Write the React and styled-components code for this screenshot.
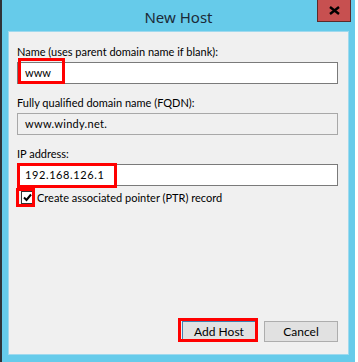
import React from 'react';
import styled, { createGlobalStyle } from 'styled-components';

const GlobalStyle = createGlobalStyle`
  html, body {
    margin: 0;
    padding: 0;
    background: #ffffff;
  }
  body {
    font-family: Lato, "Noto Sans", sans-serif;
    font-size: 11px;
    color: #000;
  }
`;

const Window = styled.div`
  width: 355px;
  height: 362px;
  box-sizing: border-box;
  background: #66cbea;
  border-left: 2px solid #2f3338;
  display: flex;
  flex-direction: column;
`;

const TitleBar = styled.div`
  height: 31px;
  display: grid;
  grid-template-columns: 1fr auto 1fr;
  align-items: start;
`;

const Title = styled.div`
  grid-column: 2;
  font-family: "Noto Sans", sans-serif;
  font-size: 15px;
  line-height: 20px;
  padding-top: 7px;
  color: #1b2a38;
`;

const CloseButton = styled.div`
  grid-column: 3;
  justify-self: end;
  margin-right: 4px;
  width: 34px;
  height: 22px;
  box-sizing: border-box;
  background: #c75050;
  border: 1px solid #5a2b2b;
  border-top: none;
  display: flex;
  align-items: center;
  justify-content: center;
`;

const Panel = styled.div`
  flex: 1;
  margin: 0 6px 7px 6px;
  background: #f0f0f0;
  border: 1px solid #9fd9ee;
  display: flex;
  flex-direction: column;
  padding: 12px 10px 12px 8px;
`;

const Label = styled.div`
  line-height: 15px;
  margin-bottom: 3px;
  color: #000;
`;

const Field = styled.div`
  position: relative;
  margin-bottom: ${p => p.$gap || 11}px;
`;

const TextBox = styled.div`
  height: 22px;
  box-sizing: border-box;
  border: 1px solid ${p => (p.$readOnly ? '#a8a8a8' : '#7a7a7a')};
  background: ${p => (p.$readOnly ? '#f0f0f0' : '#ffffff')};
  padding-left: 7px;
  line-height: 20px;
  letter-spacing: ${p => p.$spacing || 0}px;
  color: #000;
`;

const Highlight = styled.div`
  position: absolute;
  left: ${p => p.$left}px;
  top: ${p => p.$top}px;
  width: ${p => p.$w}px;
  height: ${p => p.$h}px;
  box-sizing: border-box;
  border: 3px solid #ff0000;
  pointer-events: none;
`;

const CheckRow = styled.div`
  position: relative;
  display: flex;
  align-items: center;
  gap: 3px;
  padding-left: 4px;
  height: 19px;
  margin-top: -9px;
`;

const CheckBox = styled.div`
  width: 13px;
  height: 13px;
  box-sizing: border-box;
  border: 1px solid #333;
  background: #fff;
  display: flex;
  align-items: center;
  justify-content: center;
`;

const Spacer = styled.div`
  flex: 1;
`;

const ButtonRow = styled.div`
  display: flex;
  justify-content: flex-end;
  gap: 8px;
`;

const ButtonWrap = styled.div`
  position: relative;
`;

const Button = styled.div`
  width: 74px;
  height: 21px;
  box-sizing: border-box;
  background: #e1e1e1;
  border: 1px solid ${p => (p.$default ? '#3c7fb1' : '#adadad')};
  text-align: center;
  line-height: 19px;
  font-size: 12px;
`;

export default function App() {
  return (
    <>
      <GlobalStyle />
      <Window>
        <TitleBar>
          <Title>New Host</Title>
          <CloseButton>
            <svg width="11" height="9" viewBox="0 0 11 9">
              <path d="M1 1 L10 8 M10 1 L1 8" stroke="#000" strokeWidth="2.4" />
            </svg>
          </CloseButton>
        </TitleBar>
        <Panel>
          <Label>Name (uses parent domain name if blank):</Label>
          <Field>
            <TextBox>www</TextBox>
            <Highlight $left={1} $top={-4} $w={47} $h={26} />
          </Field>
          <Label>Fully qualified domain name (FQDN):</Label>
          <Field>
            <TextBox $readOnly $spacing={0.3}>www.windy.net.</TextBox>
          </Field>
          <Label>IP address:</Label>
          <Field $gap={11}>
            <TextBox $spacing={0.6}>192.168.126.1</TextBox>
            <Highlight $left={0} $top={-1} $w={100} $h={25} />
          </Field>
          <CheckRow>
            <CheckBox>
              <svg width="9" height="9" viewBox="0 0 9 9">
                <path d="M1 4.5 L3.5 7 L8 1.5" stroke="#000" strokeWidth="2" fill="none" />
              </svg>
            </CheckBox>
            <span>Create associated pointer (PTR) record</span>
            <Highlight $left={-1} $top={0} $w={19} $h={19} />
          </CheckRow>
          <Spacer />
          <ButtonRow>
            <ButtonWrap>
              <Button $default>Add Host</Button>
              <Highlight $left={-4} $top={-3} $w={80} $h={24} />
            </ButtonWrap>
            <Button>Cancel</Button>
          </ButtonRow>
        </Panel>
      </Window>
    </>
  );
}
